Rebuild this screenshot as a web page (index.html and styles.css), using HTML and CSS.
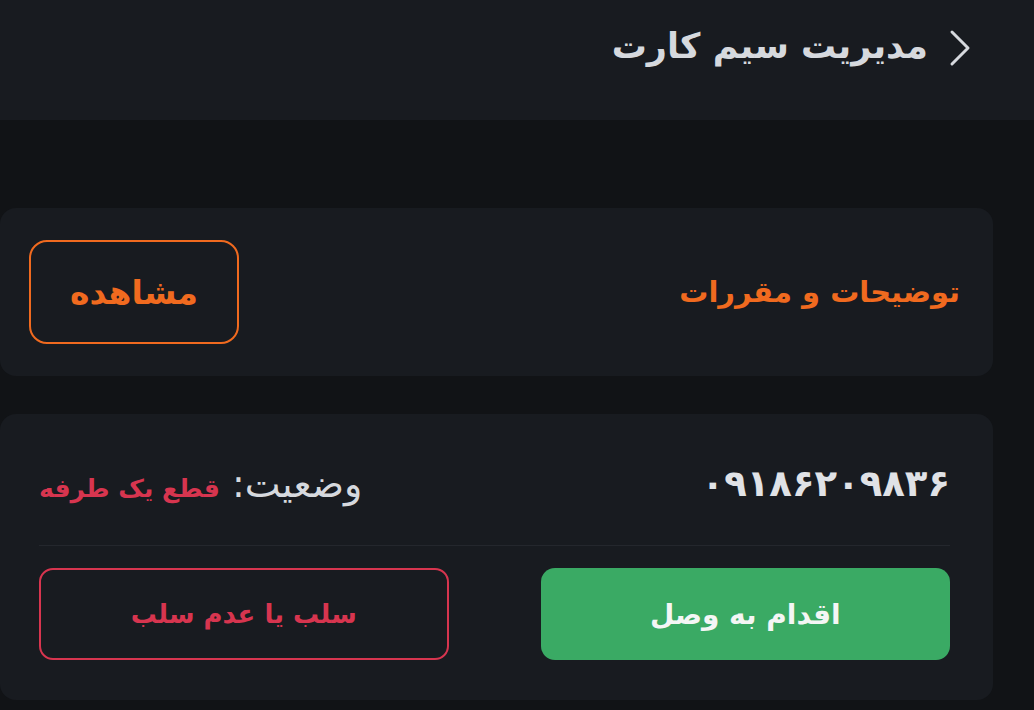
FILE: index.html
```html
<!DOCTYPE html>
<html lang="fa" dir="rtl">
<head>
    <meta charset="UTF-8">
    <meta name="viewport" content="width=device-width, initial-scale=1.0">
    <title>مدیریت سیم کارت</title>
    <link rel="stylesheet" href="styles.css">
</head>
<body>
    <header class="top-bar">
        <button class="back-button" aria-label="بازگشت">
            <svg width="24" height="38" viewBox="0 0 24 38">
                <polyline points="4,3 20,19 4,35" fill="none" stroke="#d6d9de" stroke-width="3" stroke-linecap="round" stroke-linejoin="round"/>
            </svg>
        </button>
        <h1 class="page-title">مدیریت سیم کارت</h1>
    </header>

    <main class="content">
        <section class="card rules-card">
            <h2 class="rules-title">توضیحات و مقررات</h2>
            <button class="outline-button orange">مشاهده</button>
        </section>

        <section class="card sim-card">
            <div class="sim-row">
                <span class="sim-number">۰۹۱۸۶۲۰۹۸۳۶</span>
                <span class="sim-status">وضعیت: <b class="status-value">قطع یک طرفه</b></span>
            </div>
            <div class="divider"></div>
            <div class="actions">
                <button class="solid-button green">اقدام به وصل</button>
                <button class="outline-button red">سلب یا عدم سلب</button>
            </div>
        </section>
    </main>
</body>
</html>
```

FILE: styles.css
```css
body {
    margin: 0;
    background-color: #111316;
    font-family: "DejaVu Sans", sans-serif;
    color: #d6d9de;
}
.top-bar {
    display: flex;
    align-items: center;
    height: 120px;
    padding-right: 62px;
    background-color: #181b20;
    box-sizing: border-box;
}
.back-button {
    display: flex;
    background: none;
    border: none;
    padding: 0;
    margin-left: 20px;
    margin-top: -24px;
}
.page-title {
    margin: 0;
    margin-top: -28px;
    font-size: 35px;
    font-weight: bold;
    color: #d6d9de;
}
.content {
    display: flex;
    flex-direction: column;
    gap: 38px;
    padding: 88px 41px 0 0;
}
.card {
    background-color: #181b20;
    border-radius: 16px;
    box-sizing: border-box;
}
.rules-card {
    display: flex;
    align-items: center;
    justify-content: space-between;
    height: 168px;
    padding: 0 33px 0 29px;
}
.rules-title {
    margin: 0;
    font-size: 29px;
    font-weight: bold;
    color: #f06a1f;
}
.outline-button, .solid-button {
    font-family: "DejaVu Sans", sans-serif;
    font-weight: bold;
    background: none;
    cursor: pointer;
}
.outline-button.orange {
    width: 210px;
    height: 104px;
    border: 2px solid #f06a1f;
    border-radius: 18px;
    color: #f06a1f;
    font-size: 33px;
}
.sim-card {
    height: 286px;
    padding: 0 43px 0 39px;
}
.sim-row {
    display: flex;
    align-items: center;
    justify-content: space-between;
    height: 131px;
    padding-top: 8px;
    box-sizing: border-box;
}
.sim-number {
    font-size: 37px;
    font-weight: bold;
    color: #e0e2e6;
}
.sim-status {
    font-size: 38px;
    color: #d6d9de;
}
.status-value {
    color: #d7354f;
    font-size: 25px;
}
.divider {
    height: 1px;
    background-color: #24272d;
}
.actions {
    display: grid;
    grid-template-columns: 1fr 1fr;
    gap: 92px;
    margin-top: 22px;
}
.solid-button, .outline-button.red {
    height: 92px;
    border-radius: 14px;
}
.solid-button.green {
    border: none;
    background-color: #3aaa64;
    color: #f4f6f5;
    font-size: 28px;
}
.outline-button.red {
    border: 2px solid #d7354f;
    color: #d7354f;
    font-size: 26px;
}
```
